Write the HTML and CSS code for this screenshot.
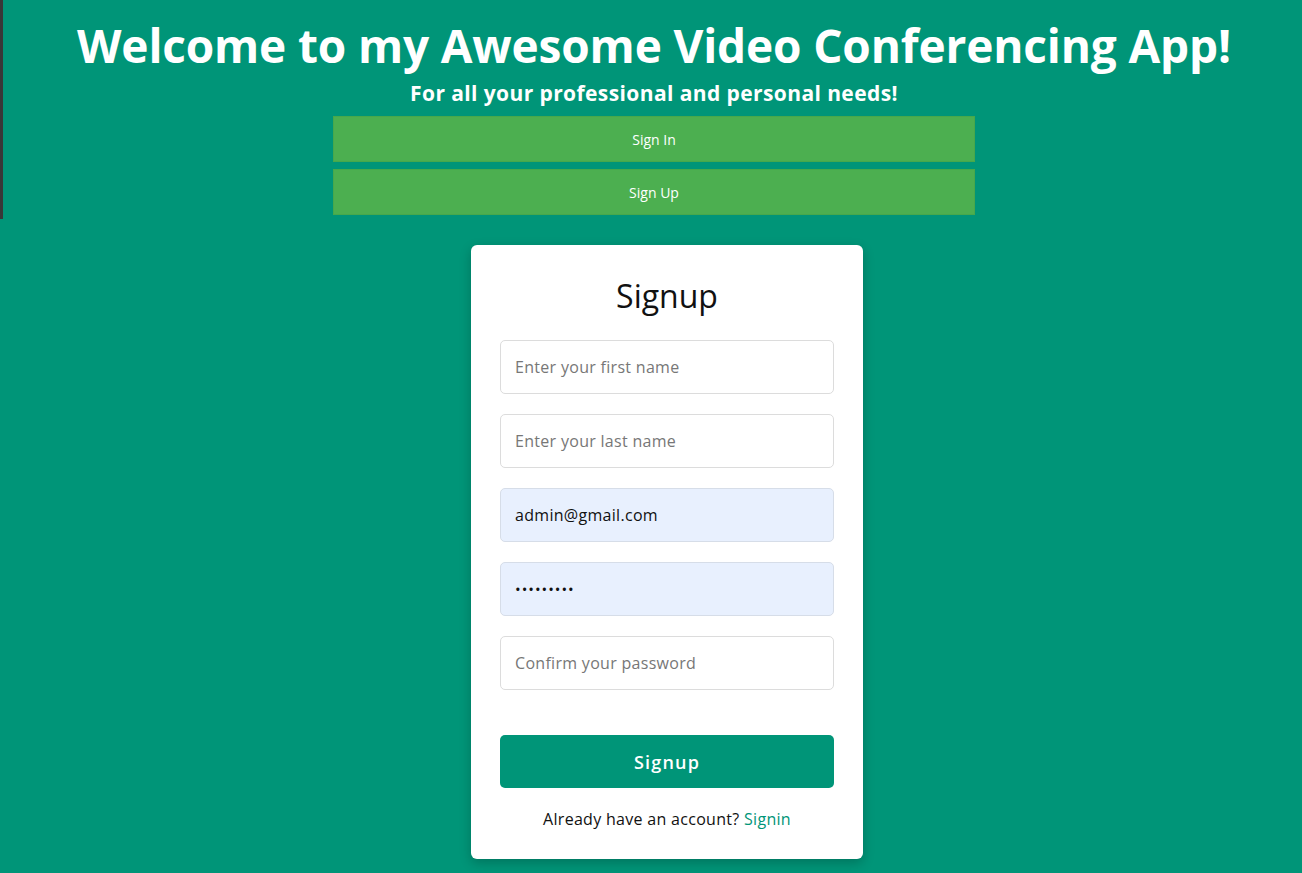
FILE: index.html
```html
<!DOCTYPE html>
<html lang="en">
<head>
<meta charset="utf-8">
<title>Awesome Video Conferencing App</title>
<link rel="stylesheet" href="styles.css">
</head>
<body>
  <header class="hero">
    <h1 class="hero-title">Welcome to my Awesome Video Conferencing App!</h1>
    <p class="hero-sub">For all your professional and personal needs!</p>
    <nav class="hero-nav">
      <button class="nav-btn" type="button">Sign In</button>
      <button class="nav-btn" type="button">Sign Up</button>
    </nav>
  </header>
  <main class="stage">
    <section class="card">
      <h2 class="card-title">Signup</h2>
      <form class="form">
        <input class="field" type="text" placeholder="Enter your first name">
        <input class="field" type="text" placeholder="Enter your last name">
        <input class="field field-filled" type="email" value="admin@gmail.com">
        <input class="field field-filled field-pass" type="password" value="123456789">
        <input class="field" type="password" placeholder="Confirm your password">
        <button class="submit" type="button">Signup</button>
      </form>
      <p class="switch">Already have an account? <a class="switch-link" href="#">Signin</a></p>
    </section>
  </main>
</body>
</html>
```

FILE: styles.css
```css
* { box-sizing: border-box; }

html, body {
  margin: 0;
  padding: 0;
  background: #009578;
  font-family: "Open Sans", "Noto Sans", sans-serif;
  height: 100%;
  overflow: hidden;
}

.hero {
  border-left: 3px solid #383838;
  padding: 0 0 4px 3px;
  text-align: center;
  color: #fff;
}

.hero-title {
  margin: 0;
  padding-top: 17px;
  font-size: 46px;
  line-height: 56px;
  font-weight: 700;
  letter-spacing: -0.15px;
}

.hero-sub {
  margin: 0;
  font-size: 21px;
  line-height: 28px;
  font-weight: 700;
  letter-spacing: 0.4px;
  padding-top: 6px;
}

.hero-nav {
  width: 642px;
  margin: 9px auto 0;
  display: flex;
  flex-direction: column;
  gap: 7px;
}

.nav-btn {
  height: 46px;
  background: #4caf50;
  border: 1px solid #47a84b;
  color: #fff;
  font-family: inherit;
  font-size: 14px;
  cursor: pointer;
}

.stage {
  display: flex;
  justify-content: center;
  padding: 26px 0 0 32px;
}

.card {
  width: 392px;
  background: #fff;
  border-radius: 6px;
  box-shadow: 0 4px 12px rgba(0, 0, 0, 0.22);
  padding: 28px 29px 29px;
  display: flex;
  flex-direction: column;
}

.card-title {
  margin: 0 0 22px;
  text-align: center;
  font-size: 32px;
  line-height: 45px;
  font-weight: 500;
  color: #111;
}

.form {
  display: flex;
  flex-direction: column;
  gap: 20px;
}

.field {
  height: 54px;
  width: 100%;
  border: 1px solid #dcdcdc;
  border-radius: 5px;
  padding: 0 14px;
  font-family: inherit;
  font-size: 16px;
  letter-spacing: 0.3px;
  color: #111;
  background: #fff;
  outline: none;
}

.field::placeholder { color: #777; }

.field-filled {
  background: #e8f0fe;
  border-color: #d6dde8;
}

.field-pass {
  font-size: 15px;
  letter-spacing: 1px;
}

.submit {
  margin-top: 25px;
  height: 53px;
  border: none;
  border-radius: 5px;
  background: #009578;
  color: #fff;
  font-family: inherit;
  font-size: 18px;
  font-weight: 600;
  letter-spacing: 1.2px;
  cursor: pointer;
}

.switch {
  margin: 20px 0 0;
  text-align: center;
  font-size: 16px;
  letter-spacing: 0.3px;
  line-height: 22px;
  color: #111;
}

.switch-link {
  color: #009578;
  text-decoration: none;
}
```
